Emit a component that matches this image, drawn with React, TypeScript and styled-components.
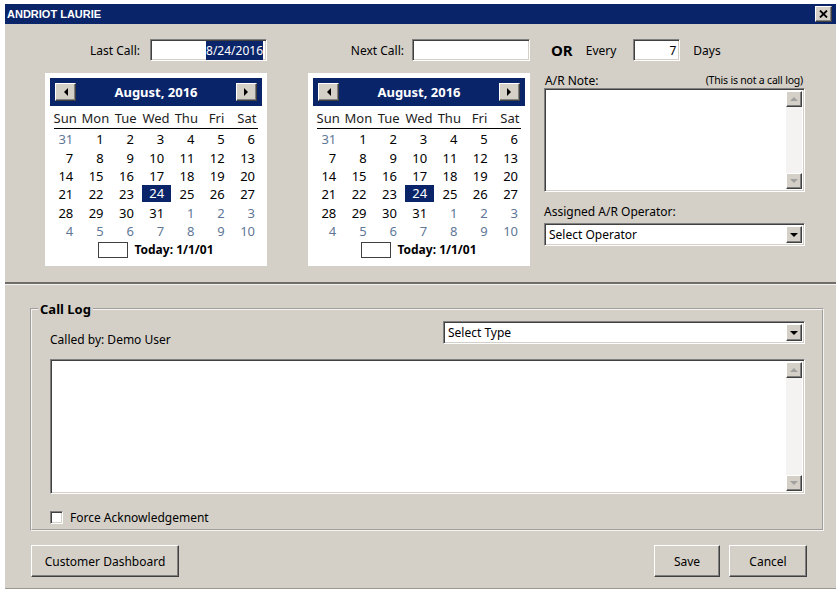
import React from 'react';
import styled, { createGlobalStyle } from 'styled-components';

// Classic Windows palette
const FACE = '#d4d0c8';
const NAVY = '#0a246a';
const DIM_DAY = '#5f7797';

const sunken = `
  border-style: solid;
  border-width: 1px;
  border-color: #808080 #ffffff #ffffff #808080;
  box-shadow: inset 1px 1px 0 #404040, inset -1px -1px 0 ${FACE};
`;

const raised = `
  border-style: solid;
  border-width: 1px;
  border-color: #ffffff #404040 #404040 #ffffff;
  box-shadow: inset -1px -1px 0 #808080, inset 1px 1px 0 ${FACE};
`;

const GlobalStyle = createGlobalStyle`
  body {
    margin: 0;
    background: #ffffff;
    font-family: "Noto Sans", "Liberation Sans", sans-serif;
    font-size: 12px;
    color: #000;
  }
  * { box-sizing: border-box; }
`;

const Window = styled.div`
  margin: 4px 0 0 5px;
  width: 831px;
  background: ${FACE};
  border-bottom: 1px solid #9a9892;
`;

const TitleBar = styled.div`
  height: 20px;
  background: ${NAVY};
  display: flex;
  align-items: center;
  justify-content: space-between;
  padding: 0 4px 0 2px;
`;

const TitleText = styled.span`
  font-family: "Liberation Sans", Arial, sans-serif;
  font-weight: bold;
  font-size: 11px;
  color: #fff;
`;

const CloseButton = styled.button`
  ${raised}
  width: 17px;
  height: 16px;
  padding: 0;
  background: ${FACE};
  display: flex;
  align-items: center;
  justify-content: center;
`;

const TopSection = styled.div`
  height: 260px;
  display: flex;
  padding: 15px 0 0 40px;
  border-bottom: 2px solid #6f6d69;
`;

const Column = styled.div<{ $width: number; $gap: number }>`
  width: ${(p) => p.$width}px;
  margin-right: ${(p) => p.$gap}px;
  display: flex;
  flex-direction: column;
`;

const FieldRow = styled.div<{ $gap?: number; $justify?: string }>`
  height: 22px;
  display: flex;
  align-items: center;
  justify-content: ${(p) => p.$justify || 'flex-end'};
  gap: ${(p) => p.$gap ?? 8}px;
`;

const Label = styled.span<{ $right?: number }>`
  white-space: nowrap;
  margin-right: ${(p) => p.$right || 0}px;
`;

const OrLabel = styled.span`
  font-weight: bold;
  font-size: 15px;
  padding-left: 7px;
`;

const TextBox = styled.div<{ $width: number; $align?: string }>`
  ${sunken}
  width: ${(p) => p.$width}px;
  height: 22px;
  background: #fff;
  display: flex;
  align-items: center;
  justify-content: ${(p) => p.$align || 'flex-start'};
  padding: 0 3px;
  font-size: 12px;
`;

const Highlight = styled.span`
  background: ${NAVY};
  color: #fff;
  padding: 1px 0;
`;

/* ---------- month calendar ---------- */

const CalendarPanel = styled.div`
  margin-top: 12px;
  width: 222px;
  height: 193px;
  background: #fff;
  padding: 5px;
`;

const CalHeader = styled.div`
  height: 28px;
  background: ${NAVY};
  display: flex;
  align-items: center;
  justify-content: space-between;
  padding: 0 5px;
  color: #fff;
  font-weight: bold;
  font-size: 13px;
`;

const NavButton = styled.div`
  ${raised}
  width: 21px;
  height: 18px;
  background: ${FACE};
  display: flex;
  align-items: center;
  justify-content: center;
`;

const WeekHeader = styled.div`
  position: relative;
  display: grid;
  grid-template-columns: repeat(7, 1fr);
  height: 23px;
  align-items: center;
  font-size: 13px;
  color: #1d1d1d;
  text-align: center;

  &::after {
    content: '';
    position: absolute;
    left: 4px;
    right: 4px;
    bottom: 0;
    border-bottom: 1px solid #000;
  }
`;

const WeekDay = styled.span``;

const DayGrid = styled.div`
  display: grid;
  grid-template-columns: repeat(7, 1fr);
  grid-auto-rows: 18.4px;
  margin-top: 1px;
  font-size: 13px;
`;

const DayCell = styled.div<{ $dim?: boolean; $selected?: boolean }>`
  display: flex;
  align-items: center;
  justify-content: flex-end;
  padding-right: 7px;
  color: ${(p) => (p.$selected ? '#fff' : p.$dim ? DIM_DAY : '#000')};
  background: ${(p) => (p.$selected ? NAVY : 'transparent')};
  margin: ${(p) => (p.$selected ? '0 0 2px 1px' : '0')};
`;

const TodayRow = styled.div`
  height: 17px;
  margin-top: 1px;
  display: flex;
  align-items: center;
  justify-content: center;
  gap: 6px;
  font-weight: bold;
  font-size: 12px;
`;

const TodayBox = styled.span`
  width: 30px;
  height: 16px;
  border: 1px solid #404040;
`;

/* ---------- right column ---------- */

const NoteHeader = styled.div`
  margin-top: 11px;
  height: 16px;
  display: flex;
  align-items: center;
  justify-content: space-between;
  padding: 0 2px 0 1px;
`;

const SmallNote = styled.span`
  font-size: 10.5px;
  letter-spacing: -0.2px;
`;

const MemoBox = styled.div<{ $height: number }>`
  ${sunken}
  height: ${(p) => p.$height}px;
  background: #fff;
  display: flex;
  justify-content: flex-end;
  padding: 2px;
`;

const ScrollBar = styled.div`
  width: 16px;
  display: flex;
  flex-direction: column;
  justify-content: space-between;
  background-color: #f4f3f1;
  background-image: radial-gradient(#d8d6d1 0.6px, transparent 0.7px);
  background-size: 2px 2px;
`;

const ScrollButton = styled.div`
  ${raised}
  height: 16px;
  background: ${FACE};
  display: flex;
  align-items: center;
  justify-content: center;
`;

const FieldLabel = styled.div`
  margin-top: 11px;
  height: 16px;
  display: flex;
  align-items: center;
`;

const SelectSlot = styled.div`
  margin-top: 4px;
`;

const Dropdown = styled.div<{ $width?: number }>`
  ${sunken}
  height: 23px;
  width: ${(p) => (p.$width ? `${p.$width}px` : 'auto')};
  background: #fff;
  display: flex;
  align-items: center;
  justify-content: space-between;
  padding: 2px 2px 2px 4px;
`;

const DropButton = styled.div`
  ${raised}
  width: 16px;
  height: 17px;
  background: ${FACE};
  display: flex;
  align-items: center;
  justify-content: center;
`;

/* ---------- call log ---------- */

const BottomSection = styled.div`
  border-top: 1px solid #f4f3f0;
  padding: 15px 0 11px 0;
`;

const GroupBox = styled.fieldset`
  margin: 0 12px 0 25px;
  padding: 3px 17px 5px 18px;
  border: 2px groove #f4f3f0;
  min-width: 0;
`;

const Legend = styled.legend`
  font-weight: bold;
  font-size: 13px;
  padding: 0 2px;
  margin-left: -12px;
`;

const LogTopRow = styled.div`
  height: 23px;
  display: flex;
  justify-content: space-between;
  align-items: flex-start;
`;

const CalledBy = styled.span`
  margin-top: 10px;
`;

const LogMemoSlot = styled.div`
  margin-top: 15px;
`;

const CheckRow = styled.label`
  display: flex;
  align-items: center;
  gap: 7px;
  margin-top: 16px;
  height: 14px;
`;

const CheckBox = styled.span`
  ${sunken}
  width: 13px;
  height: 13px;
  background: #fff;
`;

const ButtonBar = styled.div`
  display: flex;
  align-items: center;
  gap: 9px;
  margin-top: 14px;
  padding: 0 29px 0 26px;
`;

const Spacer = styled.div`
  flex: 1;
`;

const PushButton = styled.button<{ $width: number }>`
  ${raised}
  width: ${(p) => p.$width}px;
  height: 32px;
  background: ${FACE};
  font-family: "Noto Sans", "Liberation Sans", sans-serif;
  font-size: 12px;
  color: #000;
  padding: 0;
`;

/* ---------- glyphs ---------- */

const Arrow = ({ dir, color = '#000' }: { dir: 'left' | 'right' | 'up' | 'down'; color?: string }) => {
  const points = {
    left: '4,0 4,8 0,4',
    right: '0,0 0,8 4,4',
    up: '0,4 8,4 4,0',
    down: '0,0 8,0 4,4',
  }[dir];
  const horizontal = dir === 'left' || dir === 'right';
  return (
    <svg width={horizontal ? 4 : 8} height={horizontal ? 8 : 4} viewBox={horizontal ? '0 0 4 8' : '0 0 8 4'}>
      <polygon points={points} fill={color} />
    </svg>
  );
};

const CloseGlyph = () => (
  <svg width="9" height="8" viewBox="0 0 9 8">
    <path d="M1 0.5 L8 7.5 M8 0.5 L1 7.5" stroke="#000" strokeWidth="1.8" />
  </svg>
);

/* ---------- data ---------- */

const WEEKDAYS = ['Sun', 'Mon', 'Tue', 'Wed', 'Thu', 'Fri', 'Sat'];

const buildDays = () => {
  const days: { n: number; dim: boolean }[] = [{ n: 31, dim: true }];
  for (let d = 1; d <= 31; d++) days.push({ n: d, dim: false });
  for (let d = 1; d <= 10; d++) days.push({ n: d, dim: true });
  return days;
};

const DAYS = buildDays();

const MonthCalendar: React.FC<{ selected: number }> = ({ selected }) => (
  <CalendarPanel>
    <CalHeader>
      <NavButton>
        <Arrow dir="left" />
      </NavButton>
      <span>August, 2016</span>
      <NavButton>
        <Arrow dir="right" />
      </NavButton>
    </CalHeader>
    <WeekHeader>
      {WEEKDAYS.map((w) => (
        <WeekDay key={w}>{w}</WeekDay>
      ))}
    </WeekHeader>
    <DayGrid>
      {DAYS.map((d, i) => (
        <DayCell key={i} $dim={d.dim} $selected={!d.dim && d.n === selected}>
          {d.n}
        </DayCell>
      ))}
    </DayGrid>
    <TodayRow>
      <TodayBox />
      <span>Today: 1/1/01</span>
    </TodayRow>
  </CalendarPanel>
);

const Memo: React.FC<{ height: number }> = ({ height }) => (
  <MemoBox $height={height}>
    <ScrollBar>
      <ScrollButton>
        <Arrow dir="up" color="#a0a0a0" />
      </ScrollButton>
      <ScrollButton>
        <Arrow dir="down" color="#a0a0a0" />
      </ScrollButton>
    </ScrollBar>
  </MemoBox>
);

const Select: React.FC<{ text: string; width?: number }> = ({ text, width }) => (
  <Dropdown $width={width}>
    <span>{text}</span>
    <DropButton>
      <Arrow dir="down" />
    </DropButton>
  </Dropdown>
);

export default function App() {
  return (
    <>
      <GlobalStyle />
      <Window>
        <TitleBar>
          <TitleText>ANDRIOT LAURIE</TitleText>
          <CloseButton>
            <CloseGlyph />
          </CloseButton>
        </TitleBar>

        <TopSection>
          <Column $width={222} $gap={41}>
            <FieldRow $gap={10}>
              <Label>Last Call:</Label>
              <TextBox $width={117} $align="flex-end">
                <Highlight>8/24/2016</Highlight>
              </TextBox>
            </FieldRow>
            <MonthCalendar selected={24} />
          </Column>

          <Column $width={222} $gap={14}>
            <FieldRow $gap={8}>
              <Label>Next Call:</Label>
              <TextBox $width={118} />
            </FieldRow>
            <MonthCalendar selected={24} />
          </Column>

          <Column $width={261} $gap={0}>
            <FieldRow $gap={13} $justify="flex-start">
              <OrLabel>OR</OrLabel>
              <Label $right={4}>Every</Label>
              <TextBox $width={47} $align="flex-end">
                7
              </TextBox>
              <Label>Days</Label>
            </FieldRow>
            <NoteHeader>
              <span>A/R Note:</span>
              <SmallNote>(This is not a call log)</SmallNote>
            </NoteHeader>
            <Memo height={104} />
            <FieldLabel>Assigned A/R Operator:</FieldLabel>
            <SelectSlot>
              <Select text="Select Operator" />
            </SelectSlot>
          </Column>
        </TopSection>

        <BottomSection>
          <GroupBox>
            <Legend>Call Log</Legend>
            <LogTopRow>
              <CalledBy>Called by: Demo User</CalledBy>
              <Select text="Select Type" width={362} />
            </LogTopRow>
            <LogMemoSlot>
              <Memo height={135} />
            </LogMemoSlot>
            <CheckRow>
              <CheckBox />
              <span>Force Acknowledgement</span>
            </CheckRow>
          </GroupBox>

          <ButtonBar>
            <PushButton $width={148}>Customer Dashboard</PushButton>
            <Spacer />
            <PushButton $width={66}>Save</PushButton>
            <PushButton $width={78}>Cancel</PushButton>
          </ButtonBar>
        </BottomSection>
      </Window>
    </>
  );
}
